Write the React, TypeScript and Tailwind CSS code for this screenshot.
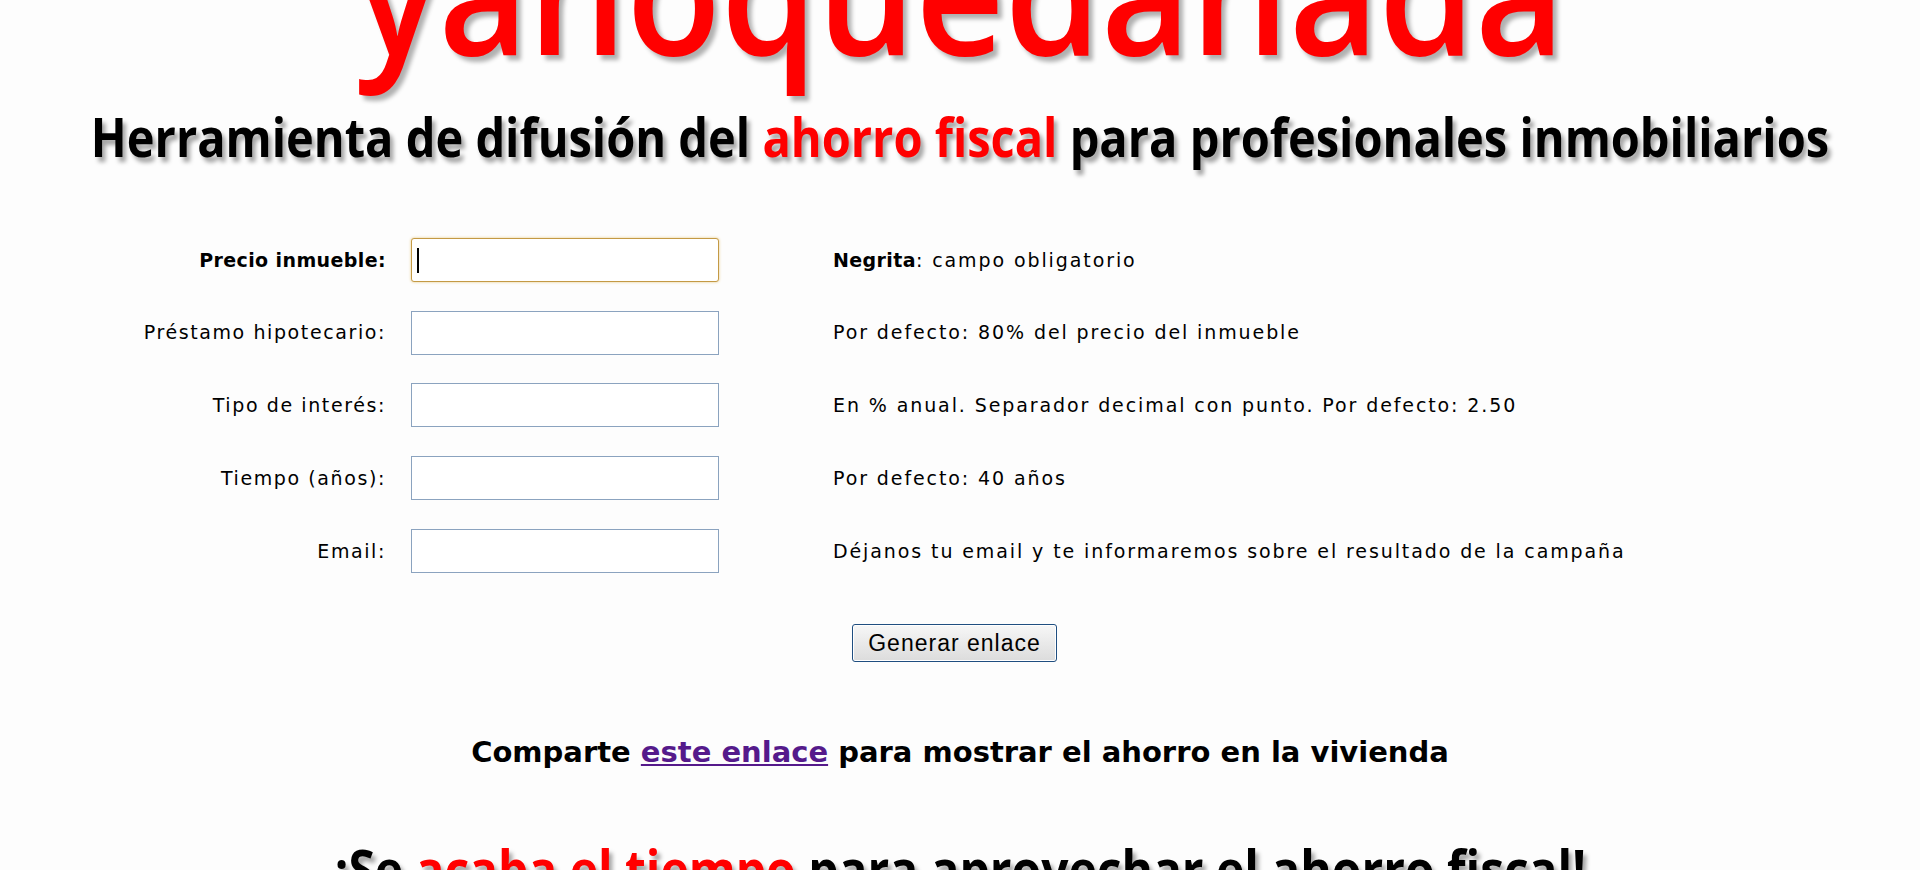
import React, { useState } from 'react';

const fields = [
  { id: 'precio', label: 'Precio inmueble:', bold: true, hint: 'campo obligatorio', hintBold: 'Negrita' },
  { id: 'prestamo', label: 'Préstamo hipotecario:', hint: 'Por defecto: 80% del precio del inmueble' },
  { id: 'interes', label: 'Tipo de interés:', hint: 'En % anual. Separador decimal con punto. Por defecto: 2.50' },
  { id: 'tiempo', label: 'Tiempo (años):', hint: 'Por defecto: 40 años' },
  { id: 'email', label: 'Email:', hint: 'Déjanos tu email y te informaremos sobre el resultado de la campaña' },
];

export default function App() {
  const [values, setValues] = useState<Record<string, string>>({});

  return (
    <div className="h-[870px] overflow-hidden bg-[#fdfdfd] text-black">
      {/* Header */}
      <header>
        <h1 className="-mt-[96px] flex justify-center font-['Open_Sans',sans-serif] text-[170px] leading-none font-semibold text-[#ff0000]">
          <span className="inline-block shrink-0 scale-x-[0.91] [text-shadow:5px_5px_5px_rgba(0,0,0,0.3)]">yanoquedanada</span>
        </h1>
        <p className="mt-[35px] flex justify-center whitespace-nowrap font-['Open_Sans',sans-serif] text-[54px] leading-none font-bold">
          <span className="inline-block shrink-0 scale-x-[0.87] [text-shadow:4px_5px_5px_rgba(0,0,0,0.35)]">
            Herramienta de difusión del <span className="text-[#ff0000]">ahorro fiscal</span> para profesionales inmobiliarios
          </span>
        </p>
      </header>

      {/* Form */}
      <form
        className="mt-[75px] font-['DejaVu_Sans',Verdana,sans-serif] text-[19px] tracking-[1.6px]"
        onSubmit={e => e.preventDefault()}
      >
        <div className="flex flex-col gap-[28.7px]">
          {fields.map((f, i) => (
            <div key={f.id} className="flex h-[44px] items-center">
              <label
                htmlFor={f.id}
                className={`w-[386px] text-right ${f.bold ? 'font-bold tracking-[0.4px]' : ''}`}
              >
                {f.label}
              </label>
              <div className="relative ml-[25px] h-[44px] w-[308px] shrink-0">
                <input
                  id={f.id}
                  value={values[f.id] ?? ''}
                  onChange={e => setValues({ ...values, [f.id]: e.target.value })}
                  className={
                    i === 0
                      ? 'h-full w-full rounded-[3px] border border-[#c49a45] bg-white px-2 shadow-[0_0_3px_#e6c885] outline-none'
                      : 'h-full w-full border border-[#8ba3bf] bg-white px-2 outline-none'
                  }
                />
                {i === 0 && <span className="absolute left-[6px] top-[10px] h-[25px] w-[2px] bg-black" />}
              </div>
              <div className="ml-[114px] whitespace-nowrap tracking-[1.9px]">
                {f.hintBold && <b className="tracking-[0.4px]">{f.hintBold}</b>}
                {f.hintBold ? ': ' : ''}
                {f.hint}
              </div>
            </div>
          ))}
        </div>

        <div className="mt-[51px] flex justify-center">
          <button
            type="submit"
            className="mr-[11px] h-[38px] w-[205px] rounded-[3px] border border-[#1f4e80] bg-gradient-to-b from-[#f7f7f7] to-[#dcdcdc] font-['Liberation_Sans',Arial,sans-serif] text-[23px] tracking-[1px] text-black shadow-[inset_0_0_0_1px_#ffffff]"
          >
            Generar enlace
          </button>
        </div>
      </form>

      <p className="mt-[76px] text-center font-['DejaVu_Sans',Verdana,sans-serif] text-[29px] leading-none font-bold">
        Comparte <a href="#" className="text-[#551a8b] underline">este enlace</a> para mostrar el ahorro en la vivienda
      </p>

      <p className="mt-[74px] flex justify-center whitespace-nowrap font-['Open_Sans',sans-serif] text-[54px] leading-none font-bold">
        <span className="inline-block shrink-0 scale-x-[0.887] [text-shadow:4px_5px_5px_rgba(0,0,0,0.35)]">
          ¡Se <span className="text-[#ff0000]">acaba el tiempo</span> para aprovechar el ahorro fiscal!
        </span>
      </p>
    </div>
  );
}
